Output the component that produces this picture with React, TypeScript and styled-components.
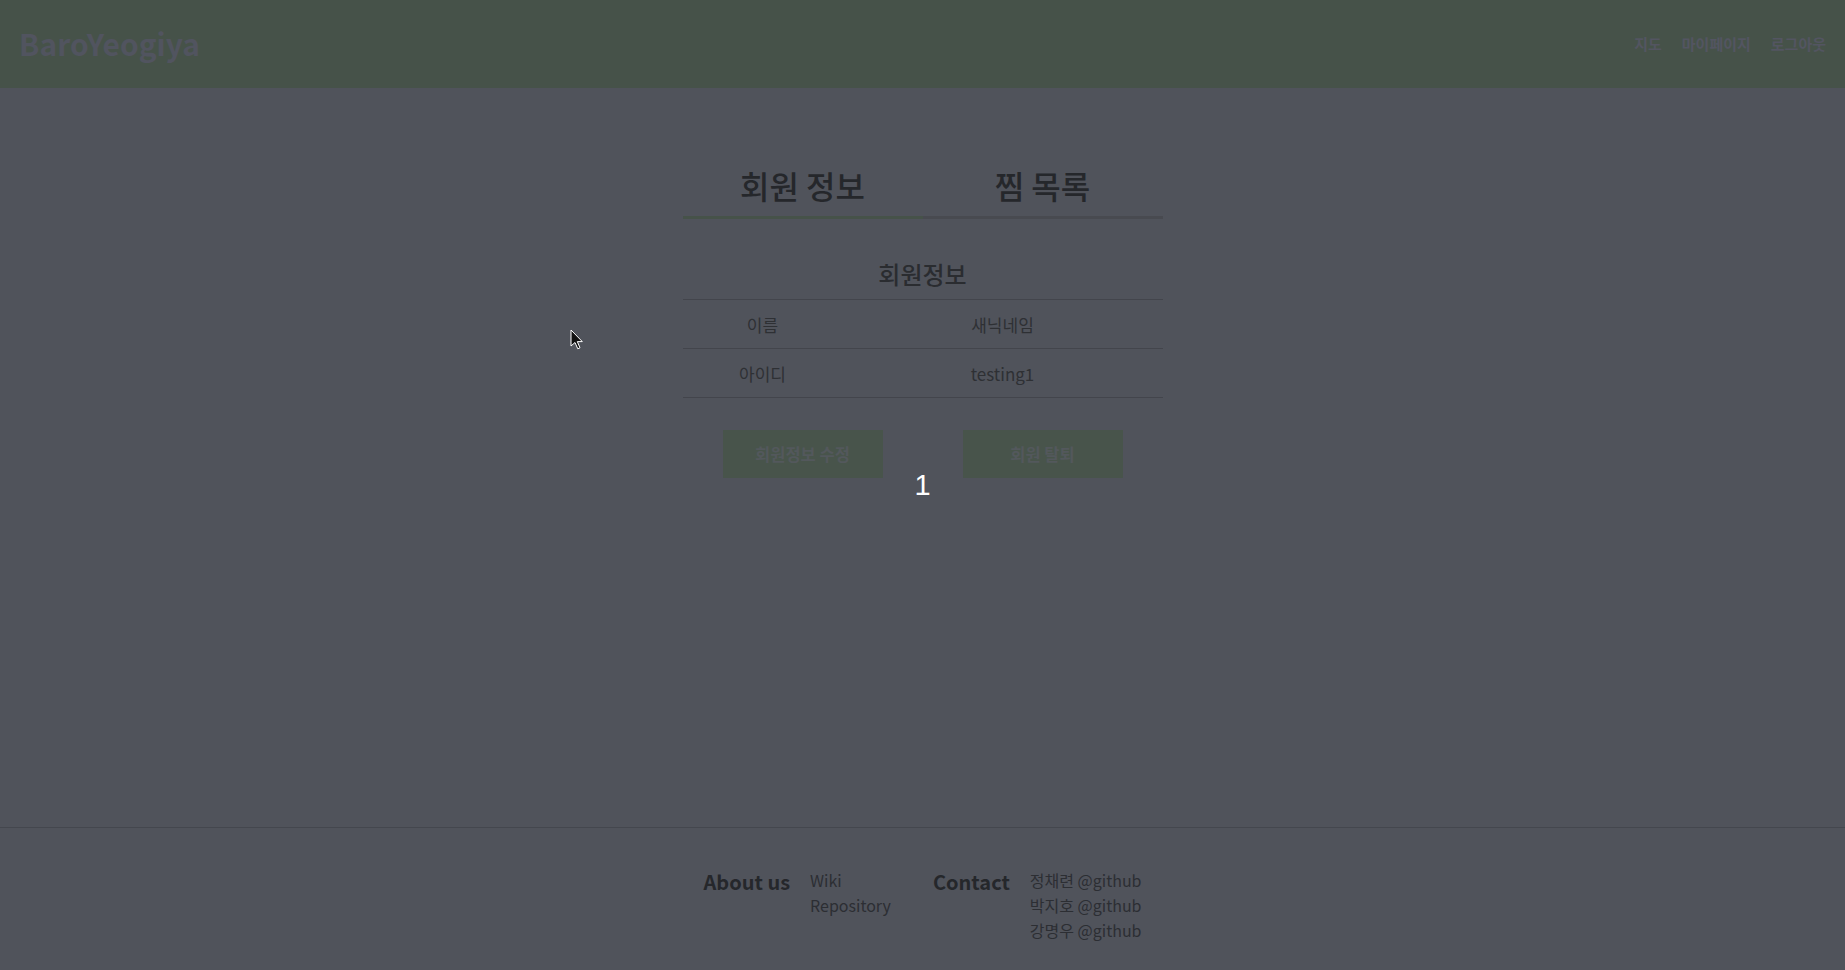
import React from "react";
import styled, { createGlobalStyle } from "styled-components";

const GlobalStyle = createGlobalStyle`
  html, body {
    margin: 0;
    padding: 0;
    background: #50535b;
  }
  body {
    font-family: "Noto Sans CJK KR", "Noto Sans", sans-serif;
  }
  * { box-sizing: border-box; }
`;

const Page = styled.div`
  position: relative;
  min-height: 970px;
  display: flex;
  flex-direction: column;
  background: #50535b;
`;

const Header = styled.header`
  height: 88px;
  flex: none;
  display: flex;
  align-items: center;
  justify-content: space-between;
  padding: 0 19px 2px 19px;
  background: #465249;
`;

const Logo = styled.div`
  font-size: 30px;
  font-weight: 700;
  color: #51545f;
`;

const Nav = styled.nav`
  display: flex;
  align-items: center;
  gap: 20px;
`;

const NavLink = styled.span`
  font-size: 15px;
  font-weight: 700;
  color: #535561;
`;

const Main = styled.main`
  flex: 1;
  padding-top: 74px;
  display: flex;
  flex-direction: column;
  align-items: center;
`;

const Panel = styled.div`
  width: 480px;
  display: flex;
  flex-direction: column;
`;

const Tabs = styled.div`
  display: flex;
`;

const Tab = styled.div<{ $active?: boolean }>`
  flex: 1;
  text-align: center;
  font-size: 32px;
  font-weight: 500;
  color: #25272b;
  padding-bottom: 8px;
  border-bottom: 3px solid ${(p) => (p.$active ? "#465249" : "#484a50")};
`;

const SectionTitle = styled.h2`
  margin: 37px 0 8px;
  text-align: center;
  font-size: 24px;
  font-weight: 500;
  color: #2a2c30;
`;

const Table = styled.div`
  display: flex;
  flex-direction: column;
  border-top: 1px solid #43454c;
`;

const Row = styled.div`
  height: 49px;
  display: grid;
  grid-template-columns: 160px 320px;
  align-items: center;
  border-bottom: 1px solid #43454c;
`;

const Cell = styled.div`
  text-align: center;
  font-size: 17px;
  color: #2e3034;
`;

const Actions = styled.div`
  display: grid;
  grid-template-columns: 240px 240px;
  justify-items: center;
  margin-top: 32px;
`;

const ActionButton = styled.button`
  width: 160px;
  height: 48px;
  border: none;
  background: #48544b;
  color: #53585c;
  font-family: inherit;
  font-size: 16.5px;
  font-weight: 700;
  padding: 0;
`;

const Badge = styled.div`
  position: absolute;
  top: 469px;
  left: 50%;
  transform: translateX(-50%);
  font-family: "Liberation Sans", Arial, sans-serif;
  font-size: 29px;
  color: #ffffff;
`;

const Cursor = styled.svg`
  position: absolute;
  left: 570px;
  top: 329px;
`;

const Footer = styled.footer`
  flex: none;
  height: 143px;
  border-top: 1px solid #44474e;
  padding-top: 39px;
  display: flex;
  justify-content: center;
  gap: 42px;
`;

const FooterGroup = styled.div`
  display: flex;
  align-items: flex-start;
  gap: 20px;
`;

const FooterHeading = styled.div`
  font-size: 20px;
  font-weight: 700;
  color: #25272b;
  line-height: 29px;
`;

const FooterList = styled.div`
  display: flex;
  flex-direction: column;
  font-size: 16px;
  color: #2c2e33;
  padding-top: 1px;
`;

const FooterItem = styled.span`
  line-height: 25px;
`;

export default function App() {
  return (
    <>
      <GlobalStyle />
      <Page>
        <Header>
          <Logo>BaroYeogiya</Logo>
          <Nav>
            <NavLink>지도</NavLink>
            <NavLink>마이페이지</NavLink>
            <NavLink>로그아웃</NavLink>
          </Nav>
        </Header>
        <Main>
          <Panel>
            <Tabs>
              <Tab $active>회원 정보</Tab>
              <Tab>찜 목록</Tab>
            </Tabs>
            <SectionTitle>회원정보</SectionTitle>
            <Table>
              <Row>
                <Cell>이름</Cell>
                <Cell>새닉네임</Cell>
              </Row>
              <Row>
                <Cell>아이디</Cell>
                <Cell>testing1</Cell>
              </Row>
            </Table>
            <Actions>
              <ActionButton>회원정보 수정</ActionButton>
              <ActionButton>회원 탈퇴</ActionButton>
            </Actions>
          </Panel>
        </Main>
        <Footer>
          <FooterGroup>
            <FooterHeading>About us</FooterHeading>
            <FooterList>
              <FooterItem>Wiki</FooterItem>
              <FooterItem>Repository</FooterItem>
            </FooterList>
          </FooterGroup>
          <FooterGroup>
            <FooterHeading>Contact</FooterHeading>
            <FooterList>
              <FooterItem>정채련 @github</FooterItem>
              <FooterItem>박지호 @github</FooterItem>
              <FooterItem>강명우 @github</FooterItem>
            </FooterList>
          </FooterGroup>
        </Footer>
        <Badge>1</Badge>
        <Cursor width="14" height="22" viewBox="0 0 14 22">
          <path
            d="M1 1 L1 17 L5 13.5 L7.8 19.8 L10 18.8 L7.3 12.6 L12.3 12.6 Z"
            fill="#111"
            stroke="#fff"
            strokeWidth="1"
            strokeLinejoin="round"
          />
        </Cursor>
      </Page>
    </>
  );
}
